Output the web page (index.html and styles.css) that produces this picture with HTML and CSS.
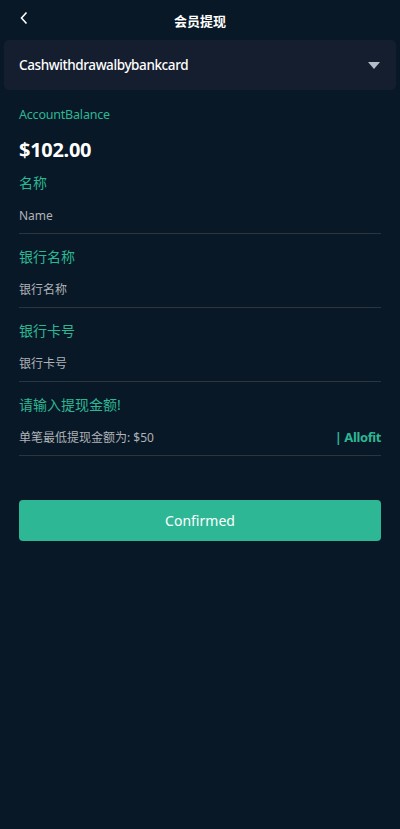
FILE: index.html
```html
<!DOCTYPE html>
<html>
<head>
    <meta charset="UTF-8">
    <title>会员提现</title>
    <link rel="stylesheet" href="styles.css">
</head>
<body>
<div class="header">
    <span class="back">
        <svg width="10" height="14" viewBox="0 0 10 14"><polyline points="7.5,1.5 2.5,7 7.5,12.5" fill="none" stroke="#fff" stroke-width="1.6"/></svg>
    </span>
    <span class="title">会员提现</span>
</div>

<div class="select">
    <span>Cashwithdrawalbybankcard</span>
    <span class="caret"></span>
</div>

<div class="content">
    <div class="balance">
        <div class="balance-label">AccountBalance</div>
        <div class="balance-value">$102.00</div>
    </div>

    <div class="field field-first">
        <div class="label">名称</div>
        <div class="value">Name</div>
    </div>
    <div class="field">
        <div class="label">银行名称</div>
        <div class="value">银行名称</div>
    </div>
    <div class="field">
        <div class="label">银行卡号</div>
        <div class="value">银行卡号</div>
    </div>
    <div class="field">
        <div class="label">请输入提现金额!</div>
        <div class="value value-row">
            <span>单笔最低提现金额为: $50</span>
            <span class="all">| Allofit</span>
        </div>
    </div>

    <button class="button">Confirmed</button>
</div>
</body>
</html>
```

FILE: styles.css
```css
body {
    margin: 0;
    background-color: #081826;
    font-family: "Noto Sans", "Noto Sans CJK SC", sans-serif;
    color: #fff;
    min-height: 829px;
}
.header {
    height: 40px;
    display: flex;
    align-items: center;
    justify-content: center;
    position: relative;
}
.back {
    position: absolute;
    left: 19px;
    top: 8px;
}
.title {
    font-size: 13px;
    font-weight: bold;
}
.select {
    margin: 0 4px;
    height: 50px;
    background-color: #151e2f;
    border-radius: 5px;
    display: flex;
    align-items: center;
    justify-content: space-between;
    padding: 0 16px 0 15px;
    font-size: 13.5px;
    font-weight: 500;
    letter-spacing: -0.4px;
}
.caret {
    width: 0;
    height: 0;
    border-left: 6.5px solid transparent;
    border-right: 6.5px solid transparent;
    border-top: 7px solid #b4bcc8;
}
.content {
    padding: 0 19px;
}
.balance {
    padding-top: 15px;
}
.balance-label {
    font-size: 12.5px;
    line-height: 20px;
    color: #2cb794;
    letter-spacing: -0.2px;
}
.balance-value {
    font-size: 20px;
    font-weight: bold;
    line-height: 30px;
    margin-top: 10px;
    letter-spacing: -0.3px;
}
.field {
    padding-top: 13px;
    border-bottom: 1px solid #2c343d;
}
.field-first {
    padding-top: 8px;
}
.label {
    font-size: 14px;
    line-height: 20px;
    color: #2cb794;
}
.value {
    font-size: 12px;
    line-height: 35px;
    padding-top: 5px;
    color: #b0b3b8;
}
.value-row {
    display: flex;
    justify-content: space-between;
}
.all {
    color: #2cb794;
    font-weight: bold;
    font-size: 13px;
    letter-spacing: -0.4px;
}
.button {
    display: block;
    width: 100%;
    margin-top: 44px;
    height: 41px;
    border: none;
    border-radius: 4px;
    background-color: #2db795;
    color: #fff;
    font-family: "Noto Sans", "Noto Sans CJK SC", sans-serif;
    font-size: 14px;
    cursor: pointer;
}
```
